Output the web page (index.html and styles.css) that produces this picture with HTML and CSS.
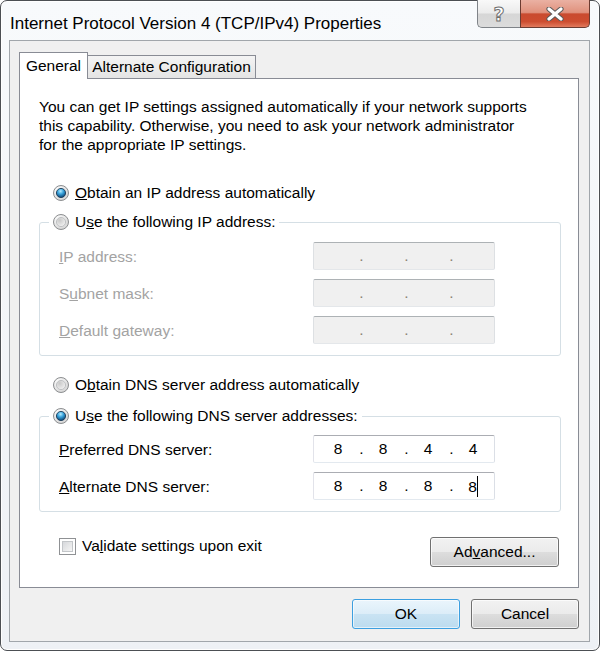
FILE: index.html
```html
<!DOCTYPE html>
<html lang="en">
<head>
  <meta charset="UTF-8">
  <title>Internet Protocol Version 4 (TCP/IPv4) Properties</title>
  <link rel="stylesheet" href="styles.css">
</head>
<body>

<div class="window">
  <!-- Title bar -->
  <div class="titlebar">
    <div class="title">Internet Protocol Version 4 (TCP/IPv4) Properties</div>
    <div class="caption-buttons">
      <div class="cap-btn help"><span>?</span></div>
      <div class="cap-btn close">
        <svg width="18" height="14" viewBox="0 0 18 14">
          <path d="M3 2 L15 12 M15 2 L3 12" stroke="#5a5a5a" stroke-width="5.2" stroke-linecap="round"/>
          <path d="M3 2 L15 12 M15 2 L3 12" stroke="#ffffff" stroke-width="3.2" stroke-linecap="round"/>
        </svg>
      </div>
    </div>
  </div>

  <div class="client">
    <!-- Tabs -->
    <div class="tabs">
      <div class="tab active">General</div>
      <div class="tab">Alternate Configuration</div>
    </div>

    <div class="tab-page">
      <p class="intro">You can get IP settings assigned automatically if your network supports<br>
        this capability. Otherwise, you need to ask your network administrator<br>
        for the appropriate IP settings.</p>

      <label class="radio first">
        <svg class="radio-icon" width="16" height="16"><use href="#radio-on"/></svg>
        <span><u>O</u>btain an IP address automatically</span>
      </label>

      <fieldset class="group">
        <legend>
          <label class="radio">
            <svg class="radio-icon" width="16" height="16"><use href="#radio-off"/></svg>
            <span>U<u>s</u>e the following IP address:</span>
          </label>
        </legend>
        <div class="field-row disabled">
          <span class="field-label"><u>I</u>P address:</span>
          <div class="ip"><span class="oct"></span><span class="dot">.</span><span class="oct"></span><span class="dot">.</span><span class="oct"></span><span class="dot">.</span><span class="oct"></span></div>
        </div>
        <div class="field-row disabled">
          <span class="field-label">S<u>u</u>bnet mask:</span>
          <div class="ip"><span class="oct"></span><span class="dot">.</span><span class="oct"></span><span class="dot">.</span><span class="oct"></span><span class="dot">.</span><span class="oct"></span></div>
        </div>
        <div class="field-row disabled">
          <span class="field-label"><u>D</u>efault gateway:</span>
          <div class="ip"><span class="oct"></span><span class="dot">.</span><span class="oct"></span><span class="dot">.</span><span class="oct"></span><span class="dot">.</span><span class="oct"></span></div>
        </div>
      </fieldset>

      <label class="radio dns-auto">
        <svg class="radio-icon" width="16" height="16"><use href="#radio-off"/></svg>
        <span>O<u>b</u>tain DNS server address automatically</span>
      </label>

      <fieldset class="group dns">
        <legend>
          <label class="radio">
            <svg class="radio-icon" width="16" height="16"><use href="#radio-on"/></svg>
            <span>U<u>s</u>e the following DNS server addresses:</span>
          </label>
        </legend>
        <div class="field-row">
          <span class="field-label"><u>P</u>referred DNS server:</span>
          <div class="ip"><span class="oct">8</span><span class="dot">.</span><span class="oct">8</span><span class="dot">.</span><span class="oct">4</span><span class="dot">.</span><span class="oct">4</span></div>
        </div>
        <div class="field-row">
          <span class="field-label"><u>A</u>lternate DNS server:</span>
          <div class="ip"><span class="oct">8</span><span class="dot">.</span><span class="oct">8</span><span class="dot">.</span><span class="oct">8</span><span class="dot">.</span><span class="oct">8<i class="caret"></i></span></div>
        </div>
      </fieldset>

      <div class="bottom-row">
        <label class="checkbox">
          <span class="box"></span>
          <span>Va<u>l</u>idate settings upon exit</span>
        </label>
        <button class="btn advanced">Ad<u>v</u>anced...</button>
      </div>
    </div>

    <div class="dialog-buttons">
      <button class="btn default">OK</button>
      <button class="btn">Cancel</button>
    </div>
  </div>
</div>

<!-- radio glyphs -->
<svg width="0" height="0" style="position:absolute">
  <defs>
    <radialGradient id="ring" cx="35%" cy="30%" r="75%">
      <stop offset="0" stop-color="#ffffff"/>
      <stop offset="1" stop-color="#d4d4d4"/>
    </radialGradient>
    <radialGradient id="hole" cx="35%" cy="30%" r="80%">
      <stop offset="0" stop-color="#c9c9c9"/>
      <stop offset="1" stop-color="#f4f4f4"/>
    </radialGradient>
    <radialGradient id="blue" cx="45%" cy="30%" r="70%">
      <stop offset="0" stop-color="#b6ecff"/>
      <stop offset="0.45" stop-color="#38a3dc"/>
      <stop offset="1" stop-color="#0a3f6e"/>
    </radialGradient>
    <g id="radio-off">
      <circle cx="8" cy="8" r="7.5" fill="url(#ring)" stroke="#8c8e90"/>
      <circle cx="8" cy="8" r="4.6" fill="url(#hole)" stroke="#b5b7ba" stroke-width="0.8"/>
    </g>
    <g id="radio-on">
      <circle cx="8" cy="8" r="7.5" fill="url(#ring)" stroke="#8c8e90"/>
      <circle cx="8" cy="8" r="4.6" fill="url(#blue)" stroke="#1d3c58" stroke-width="0.9"/>
    </g>
  </defs>
</svg>

</body>
</html>
```

FILE: styles.css
```css
body {
  margin: 0;
  background: #ffffff;
  font-family: "Liberation Sans", Arial, sans-serif;
  font-size: 15.5px;
  color: #000;
}
.window {
  width: 600px;
  height: 651px;
  box-sizing: border-box;
  border: 1px solid #4c4f53;
  border-radius: 7px;
  padding: 0 9px 8px 8px;
  background: linear-gradient(to bottom, #f8fafc, #eef1f5);
  box-shadow: inset 0 0 0 1px rgba(255,255,255,0.9);
  display: flex;
  flex-direction: column;
}
.titlebar {
  height: 39px;
  flex: none;
  display: flex;
}
.title {
  font-size: 17px;
  line-height: 20px;
  padding-top: 13px;
  padding-left: 1px;
}
.caption-buttons {
  margin-left: auto;
  margin-top: -1px;
  display: flex;
  height: 28px;
}
.cap-btn {
  box-sizing: border-box;
  height: 28px;
  display: flex;
  align-items: center;
  justify-content: center;
}
.help {
  width: 43px;
  border: 1px solid #7f8388;
  border-top: none;
  border-right: none;
  border-radius: 0 0 0 5px;
  background: linear-gradient(to bottom, #f9f9f9 0%, #ebebeb 48%, #d6d6d6 52%, #dcdcdc 100%);
}
.help span {
  font-family: "DejaVu Sans", sans-serif;
  font-weight: bold;
  font-size: 19px;
  color: #fff;
  -webkit-text-stroke: 1px #6f6f6f;
  margin-top: 1px;
}
.close {
  width: 70px;
  border: 1px solid #6b3b31;
  border-top: none;
  border-radius: 0 0 5px 0;
  background: linear-gradient(to bottom, #eab1a3 0%, #e0917d 46%, #c94a2f 52%, #cd4d30 80%, #e27a5d 100%);
}
.client {
  flex: 1;
  border: 1px solid #a1a6ab;
  background: #f0f0f0;
  padding: 11px 10px 0 9px;
}
.tabs {
  display: flex;
  align-items: flex-end;
  height: 26px;
  position: relative;
  z-index: 1;
}
.tab {
  box-sizing: border-box;
  height: 23px;
  padding: 0 4px;
  border: 1px solid #898c95;
  border-bottom: none;
  background: linear-gradient(to bottom, #f4f4f4, #e4e4e4);
  line-height: 22px;
  width: 168px;
  text-align: center;
  border-left: none;
}
.tab.active {
  width: 69px;
  height: 27px;
  margin-bottom: -1px;
  background: #fff;
  border-left: 1px solid #898c95;
  line-height: 26px;
}
.tab-page {
  box-sizing: border-box;
  height: 510px;
  border: 1px solid #898c95;
  background: #fff;
  padding: 18px 17px 0 19px;
}
.intro {
  margin: 0;
  line-height: 19px;
}
.radio {
  display: flex;
  align-items: center;
  height: 20px;
  gap: 6px;
  padding-left: 14px;
}
.radio-icon {
  flex: none;
}
.radio.first {
  margin-top: 29px;
}
.radio.dns-auto {
  margin-top: 19px;
}
.group {
  margin: 9px 0 0;
  padding: 10px 0 11px 19px;
  border: 1px solid #d5dfe5;
  border-radius: 3px;
  min-width: 0;
}
.group.dns {
  margin-top: 11px;
  padding-top: 9px;
}
.group legend {
  padding: 0 4px;
  margin-left: -10px;
}
.group legend .radio {
  padding-left: 0;
}
.field-row {
  display: flex;
  align-items: center;
  height: 28px;
}
.field-row + .field-row {
  margin-top: 9px;
}
.field-label {
  width: 254px;
  padding-top: 2px;
}
.disabled .field-label {
  color: #a3a3a3;
}
.ip {
  box-sizing: border-box;
  width: 182px;
  height: 28px;
  display: flex;
  align-items: center;
  padding-left: 6px;
  background: #fff;
  border: 1px solid;
  border-color: #abadb3 #dbdfe6 #e3e9ef #e2e3ea;
  border-radius: 2px;
}
.disabled .ip {
  background: #f0f0f0;
  border-color: #adb2b5 #dde0e3 #e4e7ea #dde0e3;
  color: #8c8273;
}
.oct {
  width: 36px;
  text-align: center;
}
.dot {
  width: 7px;
  padding-left: 2px;
  text-align: center;
}
.caret {
  display: inline-block;
  width: 1px;
  height: 21px;
  background: #000;
  vertical-align: -5px;
}
.bottom-row {
  margin-top: 25px;
  display: flex;
  justify-content: space-between;
  align-items: flex-start;
}
.checkbox {
  display: flex;
  align-items: center;
  gap: 6px;
  height: 18px;
  padding-left: 20px;
}
.box {
  box-sizing: border-box;
  width: 17px;
  height: 17px;
  border: 1px solid #8f9194;
  background: #fff;
  padding: 2px;
  display: flex;
}
.box::before {
  content: "";
  flex: 1;
  border: 1px solid #c3c6c9;
  background: linear-gradient(135deg, #d6d8db, #f5f5f5);
}
.btn {
  font-family: inherit;
  font-size: 15.5px;
  color: #000;
  height: 30px;
  border: 1px solid #707070;
  border-radius: 3px;
  background: linear-gradient(to bottom, #f2f2f2 0%, #ebebeb 49%, #dddddd 51%, #cfcfcf 100%);
  box-shadow: inset 0 0 0 1px rgba(255,255,255,0.7);
  padding: 0;
}
.btn.advanced {
  width: 129px;
  height: 30px;
  margin-right: 2px;
}
.dialog-buttons {
  display: flex;
  justify-content: flex-end;
  gap: 11px;
  margin-top: 11px;
}
.dialog-buttons .btn {
  width: 108px;
}
.btn.default {
  border-color: #3c9fe0;
  background: linear-gradient(to bottom, #eaf5fc 0%, #dcedf8 49%, #c9e3f3 51%, #bcdcef 100%);
  box-shadow: inset 0 0 0 1px rgba(255,255,255,0.6);
}
```
